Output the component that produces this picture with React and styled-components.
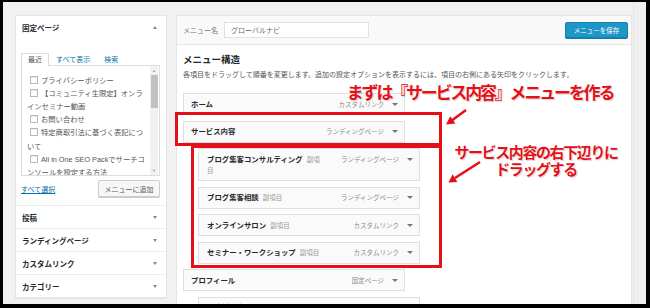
import React from "react";
import styled, { createGlobalStyle } from "styled-components";

const GlobalStyle = createGlobalStyle`
  html, body {
    margin: 0;
    padding: 0;
    background: #000;
  }
  body {
    font-family: "Liberation Sans", "Noto Sans CJK JP", sans-serif;
  }
  * {
    box-sizing: border-box;
  }
`;

const red = "#e50f17";

const Frame = styled.div`
  position: relative;
  width: 650px;
  height: 308px;
  background: #000;
  padding: 2px 4px 4px 3px;
  overflow: hidden;
`;

const Screen = styled.div`
  height: 100%;
  background: #f1f1f1;
  display: flex;
  align-items: flex-start;
  padding: 13px 0 0 12px;
  overflow: hidden;
`;

/* ---------- left column ---------- */

const Sidebar = styled.div`
  width: 152px;
  flex: none;
  background: #fff;
  border: 1px solid #e5e5e5;
  box-shadow: 0 1px 1px rgba(0, 0, 0, 0.04);
  display: flex;
  flex-direction: column;
`;

const SectionHeader = styled.div`
  height: 23px;
  padding: 0 9px 0 6px;
  display: flex;
  align-items: center;
  justify-content: space-between;
  font-size: 7.5px;
  font-weight: 600;
  color: #23282d;
  border-top: ${(p) => (p.$first ? "none" : "1px solid #eee")};
`;

const Toggle = styled.span`
  width: 0;
  height: 0;
  border-left: 2.5px solid transparent;
  border-right: 2.5px solid transparent;
  ${(p) =>
    p.$up
      ? "border-bottom: 3px solid #888;"
      : "border-top: 3px solid #888;"}
`;

const SectionBody = styled.div`
  padding: 13px 6px 8px 5px;
`;

const Tabs = styled.div`
  display: flex;
  height: 13px;
  align-items: flex-end;
`;

const Tab = styled.span`
  position: relative;
  z-index: 1;
  padding: 0 6px;
  height: 13px;
  line-height: 12px;
  font-size: 7px;
  color: ${(p) => (p.$active ? "#555" : "#0073aa")};
  background: ${(p) => (p.$active ? "#fff" : "transparent")};
  border: 1px solid ${(p) => (p.$active ? "#ddd" : "transparent")};
  border-bottom: none;
  margin-bottom: -1px;
`;

const ListBox = styled.div`
  height: 111px;
  border: 1px solid #ddd;
  display: flex;
  overflow: hidden;
`;

const ListContent = styled.div`
  flex: 1;
  padding: 7.5px 5px 0 5px;
  overflow: hidden;
`;

const ListItem = styled.div`
  font-size: 7.3px;
  line-height: 13.2px;
  color: #555;
`;

const Check = styled.span`
  display: inline-block;
  width: 8px;
  height: 8px;
  margin: 0 3px;
  vertical-align: -1px;
  border: 1px solid #b4b9be;
  background: #fff;
  box-shadow: inset 0 1px 1px rgba(0, 0, 0, 0.08);
`;

const ScrollTrack = styled.div`
  width: 8px;
  margin-right: 1px;
  background: #f1f1f1;
  display: flex;
  flex-direction: column;
  align-items: center;
  font-size: 4px;
  color: #a3a3a3;
`;

const ScrollArrow = styled.span`
  height: 9px;
  line-height: 9px;
  ${(p) => p.$bottom && "margin-top: auto;"}
`;

const ScrollThumb = styled.span`
  width: 7px;
  height: 33px;
  background: #c1c1c1;
`;

const ActionRow = styled.div`
  margin-top: 4px;
  height: 17px;
  display: flex;
  align-items: center;
  justify-content: space-between;
`;

const SelectAll = styled.span`
  font-size: 7px;
  color: #0073aa;
  text-decoration: underline;
`;

const AddButton = styled.span`
  width: 62px;
  height: 17px;
  display: flex;
  align-items: center;
  justify-content: center;
  font-size: 7px;
  color: #555;
  background: #f7f7f7;
  border: 1px solid #ccc;
  border-radius: 2px;
  box-shadow: 0 1px 0 #ccc;
`;

/* ---------- right column ---------- */

const Editor = styled.div`
  flex: 1;
  margin-left: 9px;
  height: 300px;
  background: #fff;
  border: 1px solid #e5e5e5;
  border-bottom: none;
`;

const EditorHeader = styled.div`
  height: 29px;
  padding: 0 3px 0 6px;
  display: flex;
  align-items: center;
  background: #f9f9f9;
  border-bottom: 1px solid #e5e5e5;
`;

const NameLabel = styled.span`
  font-size: 7px;
  color: #777;
  margin-right: 6px;
`;

const NameInput = styled.span`
  width: 145px;
  height: 16px;
  padding: 0 6px;
  display: flex;
  align-items: center;
  font-size: 7px;
  color: #666;
  background: #fff;
  border: 1px solid #e2e2e2;
`;

const SaveButton = styled.span`
  margin-left: auto;
  width: 63px;
  height: 16px;
  display: flex;
  align-items: center;
  justify-content: center;
  font-size: 6.5px;
  color: #fff;
  background: #1f97c6;
  border: 1px solid #1482af;
  border-radius: 2px;
  box-shadow: 0 1px 0 #137ba5;
`;

const EditorBody = styled.div`
  padding: 9px 6px 0 6px;
`;

const Heading = styled.h2`
  margin: 0;
  font-size: 9.5px;
  line-height: 12px;
  font-weight: 700;
  color: #23282d;
`;

const Description = styled.p`
  margin: 4px 0 0;
  font-size: 7px;
  line-height: 10px;
  color: #555;
`;

const MenuList = styled.div`
  margin-top: 13px;
`;

const MenuItem = styled.div`
  width: 222px;
  margin-left: ${(p) => p.$depth * 15}px;
  margin-bottom: 5.5px;
  padding: 4.5px 6px 4.5px ${(p) => (p.$depth ? 8 : 7)}px;
  display: flex;
  align-items: flex-start;
  background: #fafafa;
  border: 1px solid #dfdfdf;
`;

const ItemTitle = styled.span`
  max-width: 118px;
  font-size: 7.4px;
  line-height: 11px;
  font-weight: 700;
  color: #23282d;
`;

const SubNote = styled.span`
  margin-left: 4px;
  font-size: 6.5px;
  font-weight: 400;
  color: #999;
`;

const ItemType = styled.span`
  margin-left: auto;
  font-size: 6.5px;
  line-height: 11px;
  color: #8a8a8a;
`;

const ItemArrow = styled.span`
  margin: 4px 0 0 8px;
  width: 0;
  height: 0;
  border-left: 3px solid transparent;
  border-right: 3px solid transparent;
  border-top: 3.5px solid #777;
`;

const Scrollbar = styled.div`
  width: 13px;
  flex: none;
  align-self: stretch;
  margin: -13px 0 0 1px;
  background: #efefef;
  border-left: 1px solid #e4e4e4;
`;

/* ---------- annotations ---------- */

const RedBox = styled.div`
  position: absolute;
  left: ${(p) => p.$x}px;
  top: ${(p) => p.$y}px;
  width: ${(p) => p.$w}px;
  height: ${(p) => p.$h}px;
  border: 3px solid ${red};
  pointer-events: none;
`;

const Callout = styled.div`
  position: absolute;
  left: ${(p) => p.$x}px;
  top: ${(p) => p.$y}px;
  width: ${(p) => p.$w}px;
  font-family: "Noto Sans CJK JP", sans-serif;
  font-weight: 700;
  font-size: ${(p) => p.$size}px;
  line-height: ${(p) => p.$lh}px;
  letter-spacing: ${(p) => p.$ls}px;
  text-align: center;
  white-space: nowrap;
  color: ${red};
  text-shadow: 0 0 1px #fff, 0 0 1px #fff, 1px 1px 1px rgba(0, 0, 0, 0.2);
`;

const ArrowLayer = styled.svg`
  position: absolute;
  left: 0;
  top: 0;
  pointer-events: none;
`;

const pages = [
  "プライバシーポリシー",
  "【コミュニティ生限定】オンラインセミナー動画",
  "お問い合わせ",
  "特定商取引法に基づく表記について",
  "All in One SEO Packでサーチコンソールを設定する方法",
];

const closedSections = ["投稿", "ランディングページ", "カスタムリンク", "カテゴリー"];

const menuItems = [
  { title: "ホーム", type: "カスタムリンク", depth: 0 },
  { title: "サービス内容", type: "ランディングページ", depth: 0 },
  { title: "ブログ集客コンサルティング", type: "ランディングページ", depth: 1 },
  { title: "ブログ集客相談", type: "ランディングページ", depth: 1 },
  { title: "オンラインサロン", type: "カスタムリンク", depth: 1 },
  { title: "セミナー・ワークショップ", type: "カスタムリンク", depth: 1 },
  { title: "プロフィール", type: "固定ページ", depth: 0 },
  { title: "お客様の声", type: "固定ページ", depth: 1 },
];

export default function App() {
  return (
    <>
      <GlobalStyle />
      <Frame>
        <Screen>
          <Sidebar>
            <SectionHeader $first>
              固定ページ
              <Toggle $up />
            </SectionHeader>
            <SectionBody>
              <Tabs>
                <Tab $active>最近</Tab>
                <Tab>すべて表示</Tab>
                <Tab>検索</Tab>
              </Tabs>
              <ListBox>
                <ListContent>
                  {pages.map((p) => (
                    <ListItem key={p}>
                      <Check />
                      {p}
                    </ListItem>
                  ))}
                </ListContent>
                <ScrollTrack>
                  <ScrollArrow>▲</ScrollArrow>
                  <ScrollThumb />
                  <ScrollArrow $bottom>▼</ScrollArrow>
                </ScrollTrack>
              </ListBox>
              <ActionRow>
                <SelectAll>すべて選択</SelectAll>
                <AddButton>メニューに追加</AddButton>
              </ActionRow>
            </SectionBody>
            {closedSections.map((s) => (
              <SectionHeader key={s}>
                {s}
                <Toggle />
              </SectionHeader>
            ))}
          </Sidebar>

          <Editor>
            <EditorHeader>
              <NameLabel>メニュー名</NameLabel>
              <NameInput>グローバルナビ</NameInput>
              <SaveButton>メニューを保存</SaveButton>
            </EditorHeader>
            <EditorBody>
              <Heading>メニュー構造</Heading>
              <Description>
                各項目をドラッグして順番を変更します。追加の設定オプションを表示するには、項目の右側にある矢印をクリックします。
              </Description>
              <MenuList>
                {menuItems.map((m) => (
                  <MenuItem key={m.title} $depth={m.depth}>
                    <ItemTitle>
                      {m.title}
                      {m.depth > 0 && <SubNote>副項目</SubNote>}
                    </ItemTitle>
                    <ItemType>{m.type}</ItemType>
                    <ItemArrow />
                  </MenuItem>
                ))}
              </MenuList>
            </EditorBody>
          </Editor>

          <Scrollbar />
        </Screen>

        <RedBox $x={175} $y={112} $w={267} $h={34} />
        <RedBox $x={191} $y={145} $w={251} $h={123} />

        <Callout $x={340} $y={82} $w={280} $size={17} $lh={20} $ls={-2.2}>
          まずは『サービス内容』メニューを作る
        </Callout>
        <Callout $x={450} $y={143} $w={172} $size={15} $lh={17} $ls={-1.4}>
          サービス内容の右下辺りに
          <br />
          ドラッグする
        </Callout>

        <ArrowLayer width="650" height="308" viewBox="0 0 650 308">
          <line x1="466" y1="110" x2="452.5" y2="120" stroke={red} strokeWidth="2.6" />
          <polygon points="446,124.5 455.4,123.5 450.2,116.3" fill={red} />
          <line x1="480" y1="162" x2="455" y2="178" stroke={red} strokeWidth="2.6" />
          <polygon points="448.5,182.5 457.4,182 452.6,174.3" fill={red} />
        </ArrowLayer>
      </Frame>
    </>
  );
}
